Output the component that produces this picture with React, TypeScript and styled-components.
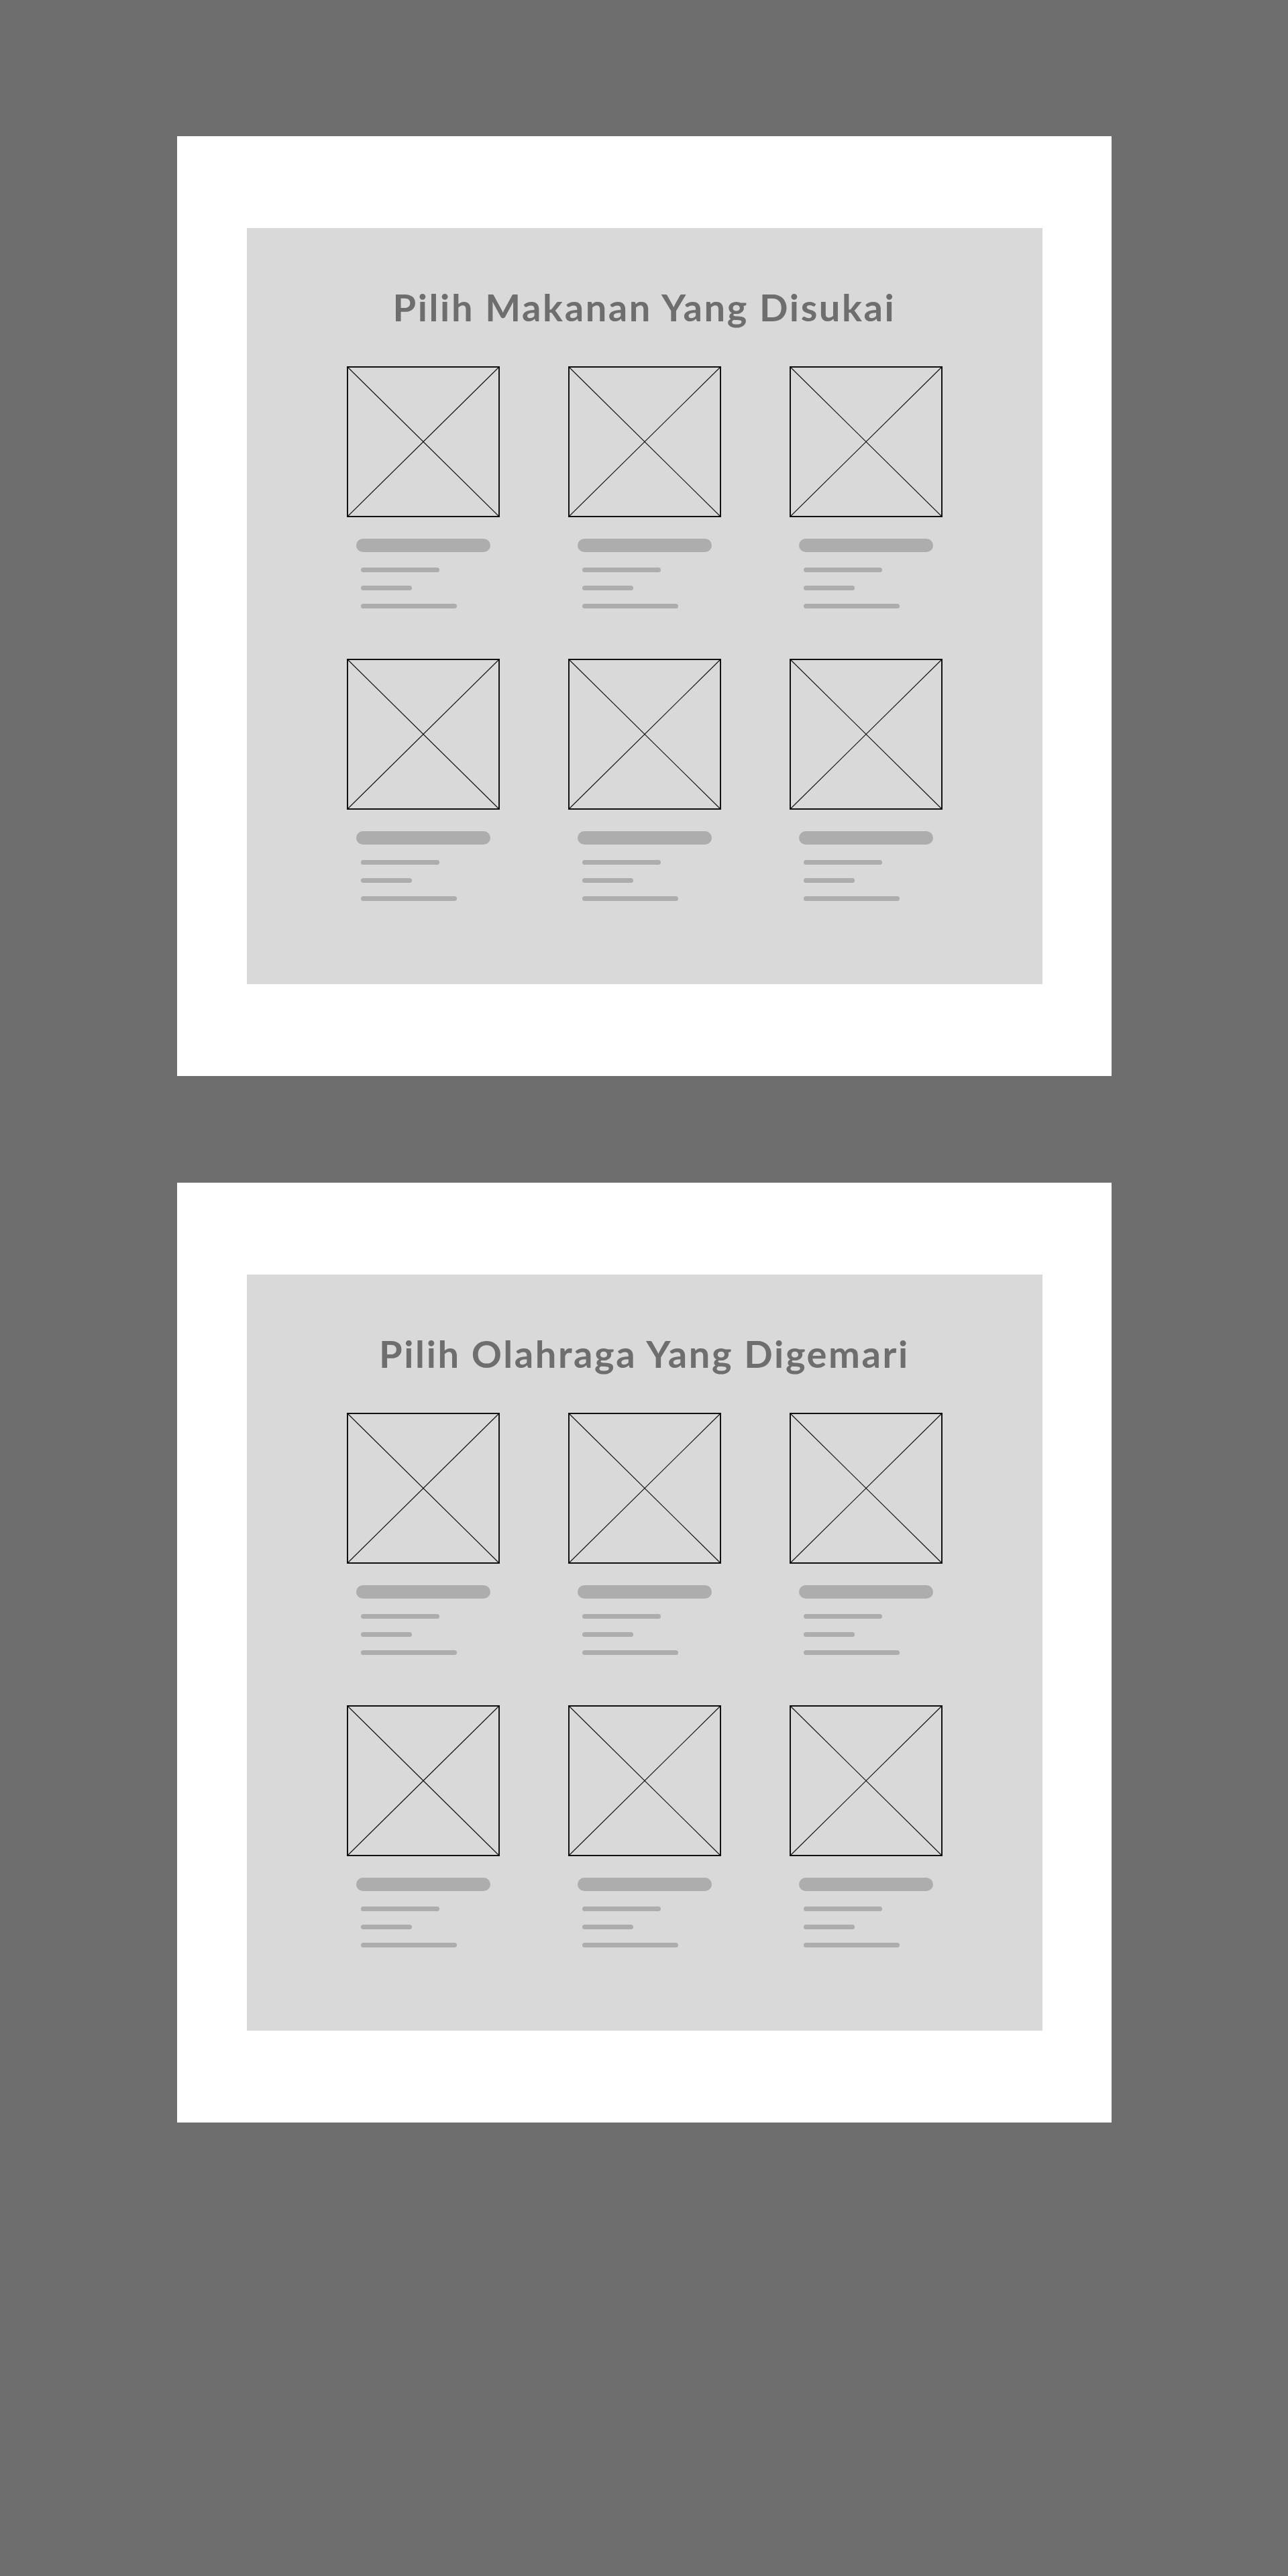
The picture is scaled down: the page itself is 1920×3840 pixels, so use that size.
import React from 'react';
import styled, { createGlobalStyle } from 'styled-components';

const GlobalStyle = createGlobalStyle`
  html, body {
    margin: 0;
    padding: 0;
    background-color: #6e6e6e;
  }
  body {
    font-family: Lato, "Open Sans", sans-serif;
  }
`;

const PageStyled = styled.div`
  display: flex;
  flex-direction: column;
  align-items: center;
  gap: 159px;
  padding-top: 203px;
  min-height: 3840px;
  box-sizing: border-box;
`;

const CardStyled = styled.section`
  width: 1393px;
  box-sizing: border-box;
  padding: 137px 103px 137px 104px;
  background-color: #ffffff;
`;

const PanelStyled = styled.div`
  height: 1127px;
  box-sizing: border-box;
  padding-top: 85px;
  background-color: #d9d9d9;
  display: flex;
  flex-direction: column;
  align-items: center;
`;

const TitleStyled = styled.h2`
  margin: 0 0 55px;
  font-size: 56px;
  line-height: 66px;
  font-weight: 700;
  letter-spacing: 2.6px;
  color: #6e6e6e;
`;

const GridStyled = styled.div`
  display: grid;
  grid-template-columns: repeat(3, 228px);
  column-gap: 102px;
  row-gap: 75px;
`;

const ItemStyled = styled.div`
  display: flex;
  flex-direction: column;
`;

const ImageBox = styled.svg`
  display: block;
  width: 228px;
  height: 225px;
`;

const NameBar = styled.div`
  width: 200px;
  height: 20px;
  margin: 32px auto 0;
  border-radius: 10px;
  background-color: #adadad;
`;

const LinesStyled = styled.div`
  display: flex;
  flex-direction: column;
  gap: 20px;
  padding: 23px 0 0 21px;
`;

const Line = styled.div<{ $width: number }>`
  width: ${(p) => p.$width}px;
  height: 7px;
  border-radius: 4px;
  background-color: #adadad;
`;

function Placeholder() {
  return (
    <ImageBox viewBox="0 0 228 225">
      <rect x="1" y="1" width="226" height="223" fill="none" stroke="#111" strokeWidth="2" />
      <line x1="1" y1="1" x2="227" y2="224" stroke="#111" strokeWidth="1.2" />
      <line x1="227" y1="1" x2="1" y2="224" stroke="#111" strokeWidth="1.2" />
    </ImageBox>
  );
}

function Item() {
  return (
    <ItemStyled>
      <Placeholder />
      <NameBar />
      <LinesStyled>
        <Line $width={117} />
        <Line $width={76} />
        <Line $width={143} />
      </LinesStyled>
    </ItemStyled>
  );
}

interface ChoiceCardProps {
  title: string;
}

function ChoiceCard(props: ChoiceCardProps) {
  return (
    <CardStyled>
      <PanelStyled>
        <TitleStyled>{props.title}</TitleStyled>
        <GridStyled>
          {[0, 1, 2, 3, 4, 5].map((i) => (
            <Item key={i} />
          ))}
        </GridStyled>
      </PanelStyled>
    </CardStyled>
  );
}

export default function App() {
  return (
    <>
      <GlobalStyle />
      <PageStyled>
        <ChoiceCard title="Pilih Makanan Yang Disukai" />
        <ChoiceCard title="Pilih Olahraga Yang Digemari" />
      </PageStyled>
    </>
  );
}
